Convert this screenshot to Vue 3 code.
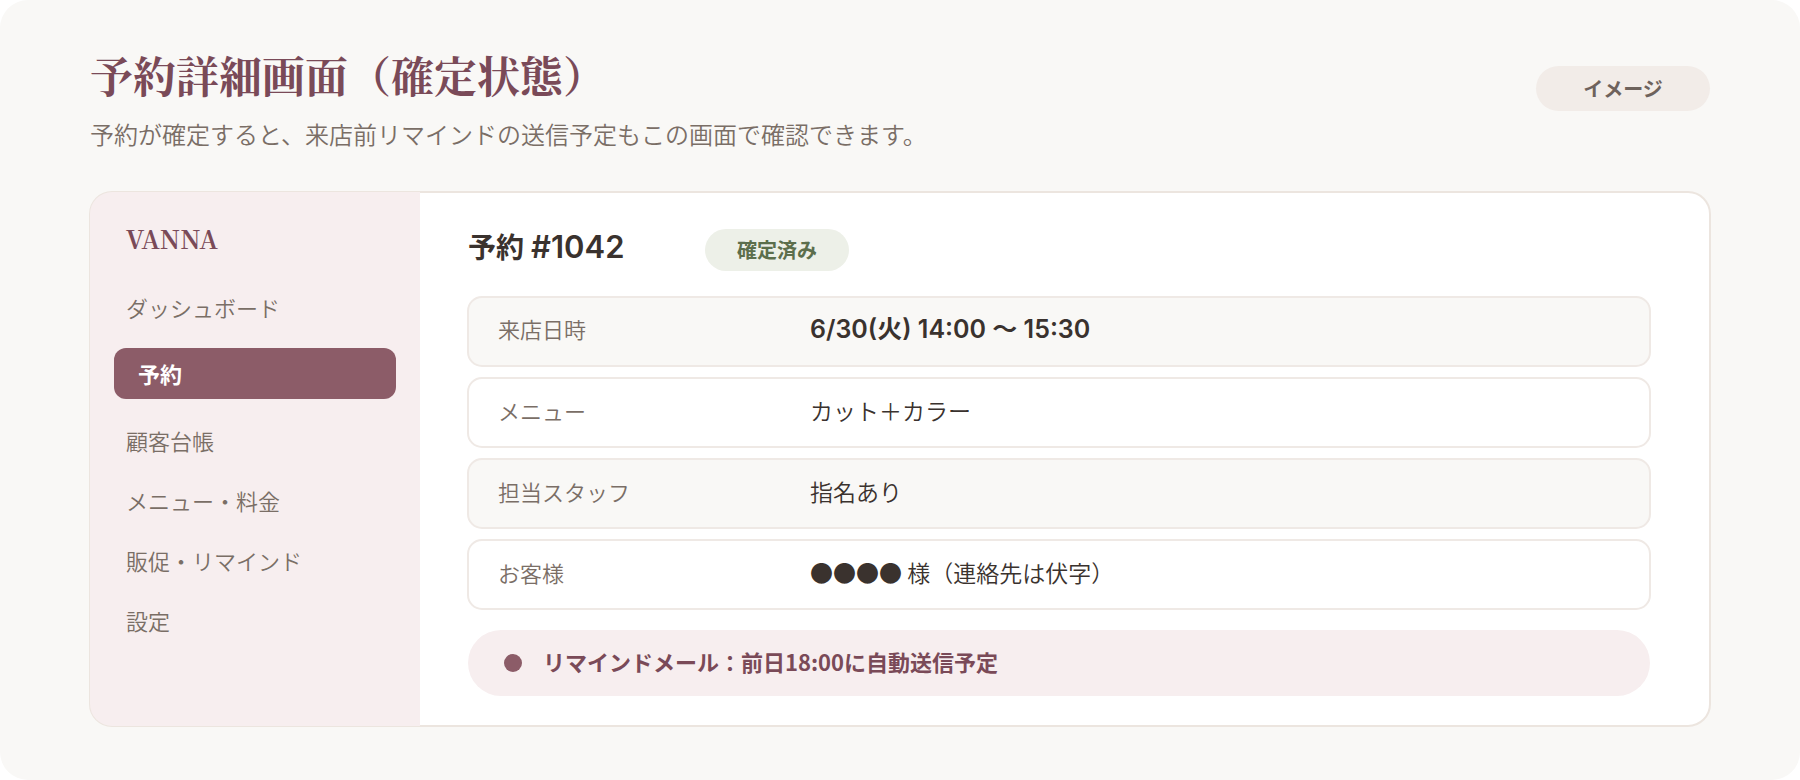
<script setup>
const navItems = [
  { label: 'ダッシュボード', active: false },
  { label: '予約', active: true },
  { label: '顧客台帳', active: false },
  { label: 'メニュー・料金', active: false },
  { label: '販促・リマインド', active: false },
  { label: '設定', active: false },
]

const details = [
  { label: '来店日時', value: '6/30(火) 14:00 〜 15:30', strong: true },
  { label: 'メニュー', value: 'カット＋カラー', strong: false },
  { label: '担当スタッフ', value: '指名あり', strong: false },
  { label: 'お客様', value: '●●●● 様（連絡先は伏字）', strong: false },
]
</script>

<template>
  <div class="page">
    <header class="header">
      <div>
        <h1 class="title">予約詳細画面（確定状態）</h1>
        <p class="lead">予約が確定すると、来店前リマインドの送信予定もこの画面で確認できます。</p>
      </div>
      <span class="badge">イメージ</span>
    </header>

    <div class="card">
      <aside class="sidebar">
        <div class="brand">VANNA</div>
        <nav>
          <a
            v-for="item in navItems"
            :key="item.label"
            href="#"
            class="nav-item"
            :class="{ active: item.active }"
            :aria-current="item.active ? 'page' : undefined"
          >{{ item.label }}</a>
        </nav>
      </aside>

      <main class="main">
        <div class="heading">
          <h2 class="booking">予約 <span class="number">#1042</span></h2>
          <span class="status">確定済み</span>
        </div>
        <dl class="details">
          <div v-for="row in details" :key="row.label" class="row">
            <dt>{{ row.label }}</dt>
            <dd :class="{ strong: row.strong }">{{ row.value }}</dd>
          </div>
        </dl>
        <div class="reminder">
          <span class="dot"></span>
          <span class="reminder-text">リマインドメール：前日18:00に自動送信予定</span>
        </div>
      </main>
    </div>
  </div>
</template>

<style>
body {
  margin: 0;
  background: #ffffff;
}
</style>

<style scoped>
.page {
  box-sizing: border-box;
  padding: 51px 89px 53px;
  background: #f9f8f6;
  border-radius: 28px;
  color: #3a322e;
  font-family: "Noto Sans CJK JP", sans-serif;
  font-size: 22px;
  line-height: 30px;
}
.header {
  display: flex;
  justify-content: space-between;
  align-items: flex-start;
  padding: 0 1px;
  margin-bottom: 39px;
}
.title {
  margin: 0 0 9px;
  color: #7a4a58;
  font-family: "Liberation Serif", "Noto Serif CJK JP", "Noto Sans CJK JP", serif;
  font-size: 43px;
  line-height: 56px;
  font-weight: 700;
}
.lead {
  margin: 0;
  color: #7a6e66;
  font-size: 24px;
  line-height: 36px;
  font-weight: 350;
}
.badge {
  box-sizing: border-box;
  flex: none;
  min-width: 174px;
  margin-top: 15px;
  padding: 0 32px;
  border-radius: 23px;
  background: #f2ece8;
  color: #6e625c;
  font-size: 20px;
  line-height: 45px;
  font-weight: 700;
  text-align: center;
}
.card {
  display: flex;
  border: 2px solid #ece5df;
  border-radius: 23px;
  background: #ffffff;
}
.sidebar {
  box-sizing: border-box;
  flex: none;
  width: 330px;
  margin: -1px 0 -1px -1px;
  padding: 30px 24px;
  border-radius: 22px 0 0 22px;
  background: #f7eeef;
}
.brand {
  margin: 0 12px 23px;
  color: #7a4a58;
  font-family: "Noto Serif CJK JP", "Liberation Serif", serif;
  font-size: 25px;
  line-height: 32px;
  font-weight: 700;
}
.nav-item {
  display: block;
  padding: 0 12px;
  color: #7a6e66;
  font-weight: 350;
  line-height: 60px;
  text-decoration: none;
}
.nav-item.active {
  margin: 11px 0;
  padding: 0 24px;
  border-radius: 12px;
  background: #8c5c68;
  color: #ffffff;
  font-weight: 700;
  line-height: 51px;
}
.main {
  flex: 1;
  min-width: 0;
  padding: 36px 58px 29px 47px;
}
.heading {
  display: flex;
  gap: 24px;
  margin: 0 1px 25px;
}
.booking {
  min-width: 213px;
  margin: 0;
  font-family: "Inter", "Noto Sans CJK JP", sans-serif;
  font-size: 28px;
  line-height: 36px;
  font-weight: 600;
}
.number {
  font-size: 31px;
}
.status {
  box-sizing: border-box;
  min-width: 144px;
  padding: 0 30px;
  border-radius: 21px;
  background: #edf0e8;
  color: #5c6e4c;
  font-size: 20px;
  line-height: 42px;
  font-weight: 700;
  text-align: center;
}
.details {
  display: grid;
  gap: 10px;
  margin: 0 0 20px;
}
.row {
  display: grid;
  grid-template-columns: 312px 1fr;
  align-items: baseline;
  min-height: 30px;
  padding: 16px 29px 21px;
  border: 2px solid #efe9e5;
  border-radius: 15px;
  font-size: 23px;
  font-weight: 350;
}
.row:nth-child(odd) {
  background: #f9f8f6;
}
.row dt {
  color: #7a6e66;
  font-size: 22px;
  line-height: 28px;
}
.row dd {
  margin: 0;
}
.row dd.strong {
  font-family: "Inter", "Noto Sans CJK JP", sans-serif;
  font-size: 25px;
  line-height: 30px;
  font-weight: 600;
}
.reminder {
  display: flex;
  align-items: center;
  gap: 21px;
  margin: 0 1px;
  padding: 16px 36px 17px;
  border-radius: 33px;
  background: #f7eeef;
  color: #7a4a58;
  font-weight: 700;
}
.reminder-text {
  padding-bottom: 3px;
}
.dot {
  flex: none;
  width: 18px;
  height: 18px;
  border-radius: 50%;
  background: #8c5c68;
}
</style>
